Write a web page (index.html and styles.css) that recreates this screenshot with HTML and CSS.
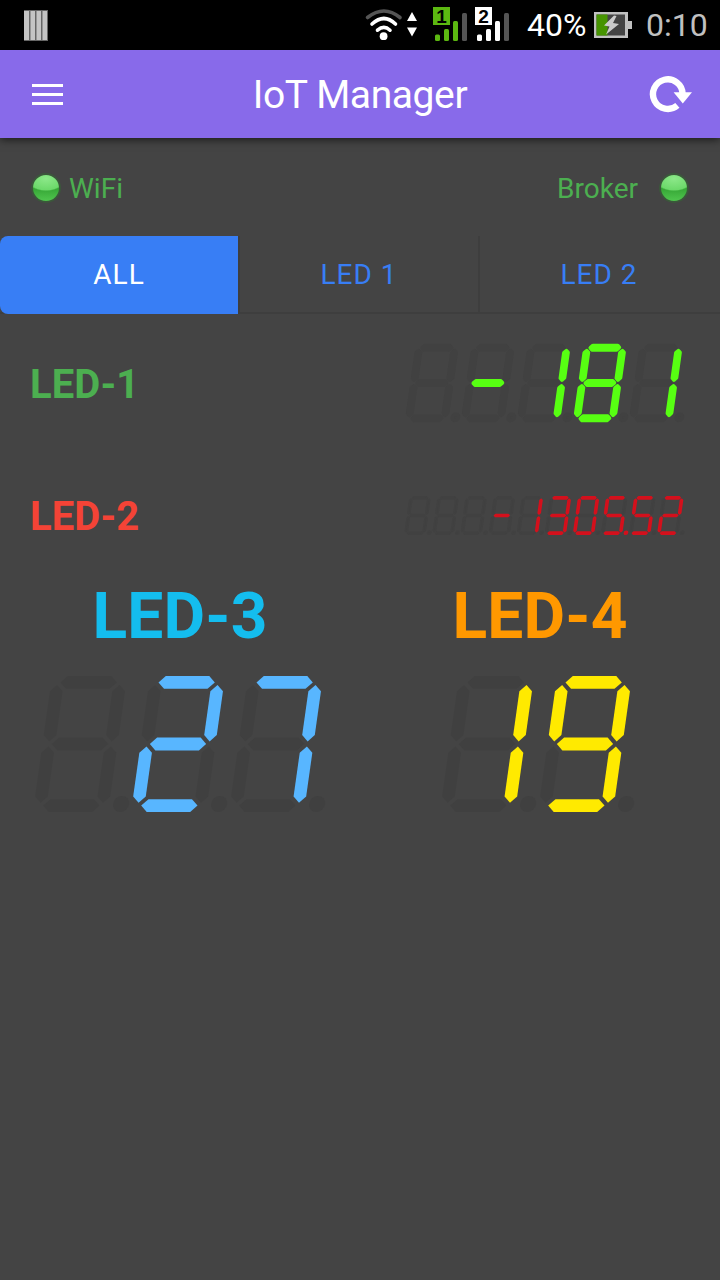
FILE: index.html
```html
<!DOCTYPE html>
<html lang="en">
<head>
    <meta charset="UTF-8">
    <meta name="viewport" content="width=device-width, initial-scale=1.0">
    <title>IoT Manager</title>
    <link rel="stylesheet" href="styles.css">
</head>
<body>
    <div class="status-bar">
        <svg class="bars-icon" width="24" height="31" viewBox="0 0 24 31">
            <path d="M0 0H24V31H0Z" fill="#666"/>
            <path d="M0 1H5V30H0ZM6.5 1H11V30H6.5ZM12.5 1H17V30H12.5ZM18.5 1H23V30H18.5Z" fill="#c4c4c4"/>
        </svg>
        <svg class="net-icons" width="148" height="50" viewBox="0 0 148 50">
            <g fill="none" stroke-width="3.6" stroke-linecap="round">
                <path d="M3.5 17.5Q20 4.5 36 17.5" stroke="#555"/>
                <path d="M8 24Q20 13 31.5 24M13.5 30.2Q20 24.5 26 30.2" stroke="#fff"/>
            </g>
            <circle cx="19.6" cy="36.2" r="3.9" fill="#fff"/>
            <path d="M43 21L48 12L53 21ZM43 27.5H53L48 36.5Z" fill="#fff"/>
            <path d="M69 7H86V25H69Z" fill="#5cb811"/>
            <path d="M111 7H128V25H111Z" fill="#fff"/>
            <g fill="#5cb811">
                <rect x="71" y="34.5" width="5" height="6.5" rx="1.5"/>
                <rect x="80" y="29" width="5" height="12" rx="1.5"/>
                <rect x="89" y="21" width="5" height="20" rx="1.5"/>
            </g>
            <g fill="#fff">
                <rect x="113" y="34.5" width="5" height="6.5" rx="1.5"/>
                <rect x="122" y="29" width="5" height="12" rx="1.5"/>
                <rect x="131" y="21" width="5" height="20" rx="1.5"/>
            </g>
            <rect x="98" y="13" width="5" height="28" rx="1.5" fill="#555"/>
            <rect x="140" y="13" width="5" height="28" rx="1.5" fill="#555"/>
            <text class="sim" x="77.5" y="23">1</text>
            <text class="sim" x="119.5" y="23">2</text>
        </svg>
        <span class="percent">40%</span>
        <svg class="battery" width="38" height="26" viewBox="0 0 38 26">
            <path d="M0 0H34V9H38V17H34V26H0Z" fill="#c0c0c0"/>
            <path d="M2.5 2.5H31V23.5H2.5Z" fill="#444"/>
            <path d="M2.5 2.5H13.5V23.5H2.5Z" fill="#469400"/>
            <path d="M20 3.5L10 13.5L15.5 14.5L12 22.5L25 12L19 11L22.5 4Z" fill="#ccc"/>
        </svg>
        <span class="clock">0:10</span>
    </div>

    <div class="header">
        <svg width="31" height="22" viewBox="0 0 31 22">
            <path d="M0 2.4H31M0 11.4H31M0 20.4H31" stroke="#fff" stroke-width="3"/>
        </svg>
        <h1>IoT Manager</h1>
        <svg width="43" height="37" viewBox="0 0 43 37">
            <path d="M28.4 29.4A14.8 14.8 0 1 1 33.6 18" fill="none" stroke="#fff" stroke-width="6.4"/>
            <path d="M24.6 16.3H43L33.8 27.5Z" fill="#fff"/>
        </svg>
    </div>

    <div class="connection">
        <div class="conn-item"><i class="lamp"></i><span>WiFi</span></div>
        <div class="conn-item broker"><span>Broker</span><i class="lamp"></i></div>
    </div>

    <div class="tabs">
        <a class="tab active">ALL</a>
        <a class="tab">LED 1</a>
        <a class="tab">LED 2</a>
    </div>

    <div class="row">
        <span class="label green">LED-1</span>
        <svg class="display display-1" data-cells="5" data-value="-181" data-round="3"></svg>
    </div>
    <div class="row row-2">
        <span class="label red">LED-2</span>
        <svg class="display display-2" data-cells="10" data-value="-1305.52" data-round="3"></svg>
    </div>
    <div class="columns">
        <div class="column">
            <span class="big-label cyan">LED-3</span>
            <svg class="display display-3" data-cells="3" data-value="27" data-round="0"></svg>
        </div>
        <div class="column">
            <span class="big-label orange">LED-4</span>
            <svg class="display display-4" data-cells="2" data-value="19" data-round="0"></svg>
        </div>
    </div>

    <script src="display.js"></script>
</body>
</html>
```

FILE: styles.css
```css
* {
    margin: 0;
    padding: 0;
    box-sizing: border-box;
}

body {
    font-family: Roboto, 'Liberation Sans', sans-serif;
    background-color: #444;
    height: 100vh;
    overflow: hidden;
}

svg {
    display: block;
    flex: none;
}

.status-bar {
    display: flex;
    align-items: center;
    height: 50px;
    padding: 0 12px 0 24px;
    background-color: #000;
    font-size: 32px;
}

.net-icons {
    margin-left: auto;
}

.sim {
    font-family: 'Liberation Sans', sans-serif;
    font-size: 19px;
    font-weight: 700;
    text-anchor: middle;
}

.percent {
    width: 67px;
    margin-left: 15px;
    color: #fff;
}

.battery {
    margin-right: 14px;
}

.clock {
    width: 62px;
    color: #c0c0c0;
}

/* Header */
.header {
    display: flex;
    align-items: center;
    justify-content: space-between;
    height: 88px;
    padding: 0 28px 0 32px;
    background-color: #886aea;
    box-shadow: 0 2px 8px rgba(0, 0, 0, 0.6);
    color: #fff;
}

.header h1 {
    font-size: 39px;
    font-weight: 400;
    letter-spacing: -0.4px;
    margin-left: 8px;
    padding-top: 1px;
}

/* Connection state */
.connection {
    display: flex;
    justify-content: space-between;
    height: 98px;
    padding: 2px 31px 0;
    color: #4caf50;
    font-size: 28px;
}

.conn-item {
    display: flex;
    align-items: center;
    gap: 8px;
}

.broker {
    gap: 21px;
}

.lamp {
    width: 30px;
    height: 30px;
    border: 2px solid #3b573b;
    border-radius: 50%;
    background: radial-gradient(ellipse 75% 48% at 50% 14%, #8ce889 0%, #6cd96a 90%, transparent 100%),
                linear-gradient(#55cc53 30%, #36a636 52%, #50c64e 100%);
}

/* Tabs */
.tabs {
    display: grid;
    grid-template-columns: repeat(3, 1fr);
    height: 78px;
    border-bottom: 2px solid #3e3e3e;
}

.tab {
    display: flex;
    align-items: center;
    justify-content: center;
    height: 76px;
    border-right: 2px solid #3e3e3e;
    color: #387ef5;
    font-size: 28px;
    letter-spacing: 1px;
}

.tab:last-child {
    border-right-color: transparent;
}

.tab.active {
    height: 78px;
    padding-bottom: 2px;
    border-radius: 8px 0 0 8px;
    background-color: #387ef5;
    background-clip: padding-box;
    color: #fff;
}

/* Widgets */
.row {
    display: flex;
    align-items: center;
    justify-content: space-between;
    height: 138px;
    padding: 0 35px 0 30px;
}

.row-2 {
    height: 127px;
}

.label {
    padding-top: 2px;
    font-size: 40px;
    font-weight: 700;
    letter-spacing: 0.1px;
}

.columns {
    display: grid;
    grid-template-columns: 1fr 1fr;
}

.column {
    display: flex;
    flex-direction: column;
    align-items: center;
    gap: 22px;
}

.big-label {
    font-size: 64px;
    font-weight: 700;
    line-height: 75px;
    letter-spacing: 0.2px;
}

.green { color: #4caf50; }
.red { color: #f44336; }
.cyan { color: #14bdee; }
.orange { color: #ff9800; }

/* Segment displays */
.display {
    overflow: visible;
    fill: #404040;
    stroke: #404040;
    stroke-width: 0;
    stroke-linejoin: round;
}

.display-1 {
    --on: #57ff12;
    width: 280px;
    height: 78px;
    stroke-width: 7px;
}

.display-2 {
    --on: #d4101c;
    width: 281px;
    height: 39px;
    stroke-width: 6px;
}

.display-3 {
    --on: #58b6ff;
    width: 294px;
    height: 136px;
    margin-right: 1px;
}

.display-4 {
    --on: #ffea00;
    width: 196px;
    height: 136px;
    margin-right: 4px;
}

.display .on {
    fill: var(--on);
    stroke: var(--on);
}

/* unlit segments are barely visible on the smaller readouts */
.display-1,
.display-2 {
    fill: #414141;
    stroke: #414141;
}
```

FILE: display.js
```js
const NS = 'http://www.w3.org/2000/svg';
const CELL = 98;
const HEIGHT = 136;

// Lit segments for each character
const CHARS = {
    ' ': '', '-': 'g', '0': 'abcdef', '1': 'bc', '2': 'abged', '3': 'abgcd',
    '4': 'fgbc', '5': 'afgcd', '6': 'afgedc', '7': 'abc', '8': 'abcdefg', '9': 'abcdfg'
};

// r shrinks the segment so that a round stroke can fill it out again
function horizontal(y, r) {
    const h = 6.4 - r;
    const left = 9.3 + r;
    const right = 65.6 - r;
    return `M${left} ${y}L${left + h} ${y - h}H${right - h}L${right} ${y}L${right - h} ${y + h}H${left + h}Z`;
}

function vertical(x, y, r) {
    const w = 6.3 - r;
    const top = y + r;
    const bottom = y + 56.4 - r;
    return `M${x} ${top}L${x + w} ${top + w}V${bottom - w}L${x} ${bottom}L${x - w} ${bottom - w}V${top + w}Z`;
}

function segments(r) {
    return {
        a: horizontal(6.4, r),
        b: vertical(68.7, 9, r),
        c: vertical(68.7, 70.4, r),
        d: horizontal(129.6, r),
        e: vertical(6.3, 70.4, r),
        f: vertical(6.3, 9, r),
        g: horizontal(68, r),
        '.': `M${79 + r} 128a${8 - r} ${8 - r} 0 1 0 ${16 - 2 * r} 0a${8 - r} ${8 - r} 0 1 0 ${2 * r - 16} 0Z`
    };
}

document.querySelectorAll('.display').forEach(function (svg) {
    const count = Number(svg.dataset.cells);
    const shapes = segments(Number(svg.dataset.round));
    const cells = svg.dataset.value.match(/[-\d]\.?/g) || [];
    while (cells.length < count) cells.unshift(' ');

    svg.setAttribute('viewBox', `0 0 ${CELL * count} ${HEIGHT}`);
    svg.setAttribute('preserveAspectRatio', 'none');
    svg.setAttribute('role', 'img');
    svg.setAttribute('aria-label', svg.dataset.value);

    const lit = [];
    const add = function (name, i, on) {
        const path = document.createElementNS(NS, 'path');
        path.setAttribute('d', shapes[name]);
        path.setAttribute('transform', `translate(${i * CELL + HEIGHT * 0.1405} 0) skewX(-8)`);
        if (on) path.setAttribute('class', 'on');
        svg.appendChild(path);
    };
    cells.forEach(function (cell, i) {
        Object.keys(shapes).forEach(function (name) {
            const on = CHARS[cell[0]].includes(name) || (name === '.' && cell.length > 1);
            if (on) lit.push([name, i]);
            else add(name, i, false);
        });
    });
    lit.forEach(([name, i]) => add(name, i, true));
});
```
